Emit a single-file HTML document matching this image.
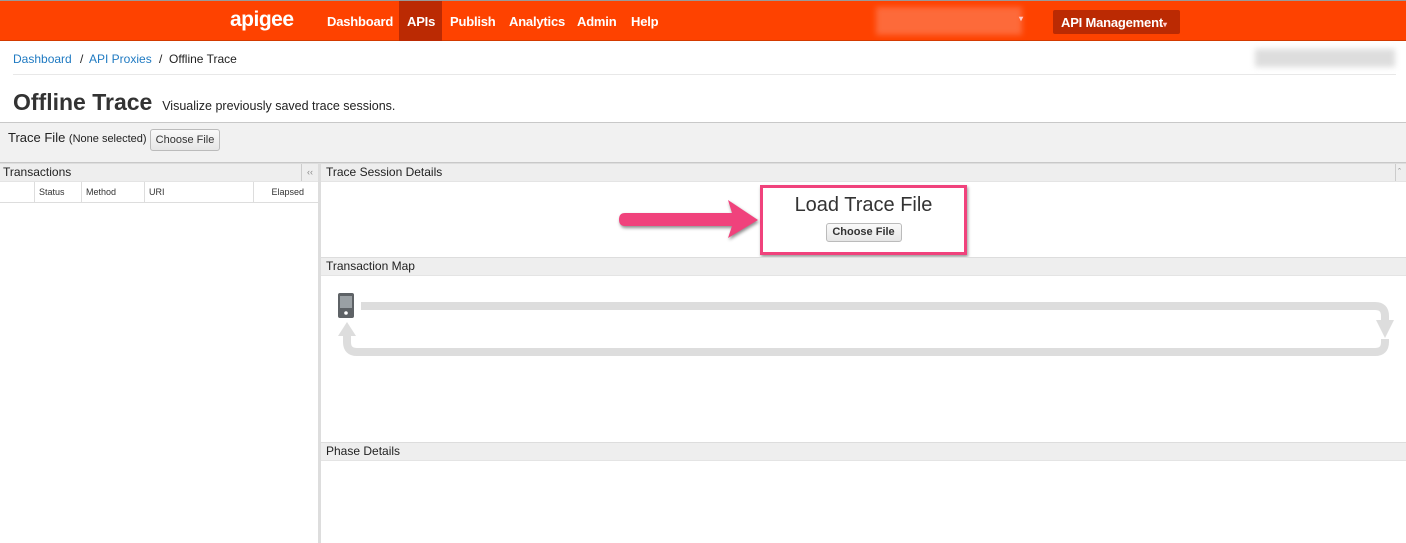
<!DOCTYPE html><html><head><style>
*{margin:0;padding:0;box-sizing:border-box}
body{width:1406px;height:543px;overflow:hidden;background:#fff;font-family:"Liberation Sans",Arial,sans-serif;position:relative;color:#333}
.a{position:absolute}
.nav{left:0;top:0;width:1406px;height:41px;background:#fe4200;border-top:1px solid #999;border-bottom:1px solid #d33a00}
.nav span{position:absolute;top:13px;color:#fff;font-size:13px;font-weight:bold;letter-spacing:-0.2px}
.btn{border:1px solid #bbb;border-radius:3px;background:linear-gradient(#fafafa,#e6e6e6);font-size:11px;color:#333;text-align:center}
.hdr{background:#eee;border-top:1px solid #ddd;border-bottom:1px solid #e4e4e4;font-size:12px;color:#222}
.bc{position:absolute;top:52px;font-size:12px;color:#222}
</style></head><body>
<div class="a nav">
<span style="left:230px;top:7px;font-size:21px;letter-spacing:-0.5px">apigee</span>
<div class="a" style="left:399px;top:0;width:43px;height:40px;background:#bb2a03"></div>
<span style="left:327px">Dashboard</span><span style="left:407px">APIs</span><span style="left:450px">Publish</span><span style="left:509px">Analytics</span><span style="left:577px">Admin</span><span style="left:631px">Help</span>
<div class="a" style="left:876px;top:6px;width:146px;height:28px;background:#fd6a3a;filter:blur(3px)"></div>
<span style="left:1019px;top:13px;font-size:8px;color:#fcc">▾</span>
<div class="a" style="left:1053px;top:9px;width:127px;height:24px;background:#bb2a03;border-radius:2px"></div>
<span style="left:1061px;top:14px;font-size:13px">API Management<span style="position:static;font-size:8px;color:#fcc">▾</span></span>
</div>
<span class="bc" style="left:13px;color:#1f7ac2">Dashboard</span>
<span class="bc" style="left:80px">/</span>
<span class="bc" style="left:89px;color:#1f7ac2">API Proxies</span>
<span class="bc" style="left:159px">/</span>
<span class="bc" style="left:169px">Offline Trace</span>
<div class="a" style="left:1255px;top:49px;width:140px;height:18px;background:#ddd;filter:blur(3px)"></div>
<div class="a" style="left:13px;top:74px;width:1383px;height:1px;background:#e8e8e8"></div>
<div class="a" style="left:13px;top:89px;font-size:23px;font-weight:bold;color:#333">Offline Trace <span style="font-size:12.5px;font-weight:normal;color:#222">&nbsp;Visualize previously saved trace sessions.</span></div>
<div class="a" style="left:0;top:122px;width:1406px;height:41px;background:#f1f1f1;border-top:1px solid #c8c8c8;border-bottom:1px solid #c8c8c8"></div>
<div class="a" style="left:8px;top:130px;font-size:13px;color:#222">Trace File <span style="font-size:11px">(None selected)</span></div>
<div class="a btn" style="left:150px;top:129px;width:70px;height:22px;line-height:20px">Choose File</div>
<div class="a hdr" style="left:0;top:163px;width:318px;height:19px;padding:1px 3px">Transactions</div>
<div class="a" style="left:301px;top:164px;width:17px;height:17px;border-left:1px solid #ccc;font-size:9px;color:#888;text-align:center;line-height:16px">‹‹</div>
<div class="a" style="left:0;top:182px;width:318px;height:21px;border-bottom:1px solid #ddd;font-size:9px;color:#333">
<div class="a" style="left:34px;top:0;height:20px;border-left:1px solid #ddd;padding:5px 4px">Status</div>
<div class="a" style="left:81px;top:0;height:20px;border-left:1px solid #ddd;padding:5px 4px">Method</div>
<div class="a" style="left:144px;top:0;height:20px;border-left:1px solid #ddd;padding:5px 4px">URI</div>
<div class="a" style="left:253px;top:0;width:65px;height:20px;border-left:1px solid #ddd;padding:5px 14px 0 0;text-align:right">Elapsed</div>
</div>
<div class="a" style="left:318px;top:163px;width:3px;height:380px;background:#ddd"></div>
<div class="a hdr" style="left:321px;top:163px;width:1085px;height:19px;padding:1px 5px">Trace Session Details</div>
<div class="a" style="left:1395px;top:164px;width:11px;height:17px;border-left:1px solid #ccc;font-size:9px;color:#888;line-height:16px;padding-left:2px">ˆ</div>
<div class="a" style="left:760px;top:185px;width:207px;height:70px;border:3px solid #f0427c;box-shadow:1px 2px 3px rgba(0,0,0,.4);text-align:center">
<div style="font-size:20px;color:#333;margin-top:6px">Load Trace File</div>
<div class="btn" style="width:76px;height:19px;line-height:17px;margin:6px auto 0;font-weight:bold">Choose File</div></div>
<svg class="a" style="left:612px;top:194px" width="152" height="50"><g style="filter:drop-shadow(1px 2px 1.5px rgba(0,0,0,.45))"><path d="M13 19 H120 L116 6 L146 26 L116 44 L120 32 H13 Q7 32 7 25.5 Q7 19 13 19Z" fill="#f0427c"/></g></svg>
<div class="a hdr" style="left:321px;top:257px;width:1085px;height:19px;padding:1px 5px">Transaction Map</div>
<svg class="a" style="left:321px;top:276px" width="1085" height="100">
<path d="M40 30 H1054 Q1064 30 1064 40 V45" stroke="#ddd" stroke-width="8" fill="none"/>
<path d="M1055 44 L1073 44 L1064 62Z" fill="#ddd"/>
<path d="M1064 63 V66 Q1064 76 1054 76 H36 Q26 76 26 66 V59" stroke="#ddd" stroke-width="8" fill="none"/>
<path d="M17 60 L35 60 L26 46Z" fill="#ddd"/>
<rect x="17" y="17" width="16" height="25" rx="2" fill="#5e6266"/>
<rect x="19" y="20" width="12" height="12" fill="#9aa0a4"/>
<circle cx="25" cy="37" r="1.8" fill="#fff"/>
</svg>
<div class="a hdr" style="left:321px;top:442px;width:1085px;height:19px;padding:1px 5px">Phase Details</div>
</body></html>
